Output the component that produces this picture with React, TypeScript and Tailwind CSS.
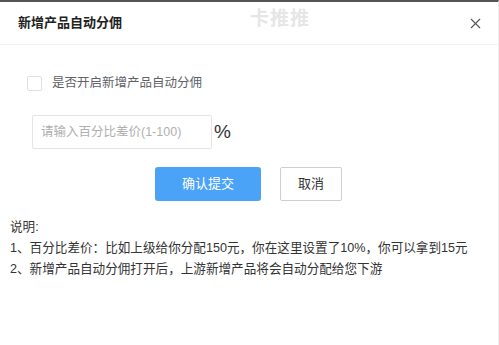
import React, { useState } from 'react';
import { X } from 'lucide-react';

const font = { fontFamily: '"Liberation Sans", "Noto Sans CJK SC", sans-serif' };

export default function App() {
  const [checked, setChecked] = useState(false);
  const [value, setValue] = useState('');

  return (
    <div className="w-[499px] h-[345px] bg-white overflow-hidden border-t-2 border-[#555] border-r border-r-[#eee]" style={font}>
      <div className="relative h-[43px] flex items-center justify-between pl-[18px] pr-[14px] border-b border-[#f3f3f3]">
        <h2 className="text-[13px] font-bold text-[#222]">新增产品自动分佣</h2>
        <span className="absolute left-[250px] top-[3px] text-[19px] font-bold text-[#e6e6e6] tracking-[1px]">卡推推</span>
        <button className="text-[#555]"><X className="w-[17px] h-[17px]" strokeWidth={1.6} /></button>
      </div>

      <div className="pt-[29px] pl-[27px]">
        <label className="flex items-center gap-[10px] cursor-pointer">
          <input type="checkbox" checked={checked} onChange={e => setChecked(e.target.checked)} className="sr-only" />
          <span className="w-[15px] h-[15px] rounded-[2px] border border-[#dcdfe6] bg-white"></span>
          <span className="text-[12.5px] text-[#606266]">是否开启新增产品自动分佣</span>
        </label>

        <div className="flex items-center mt-[22px] ml-[5px]">
          <input
            value={value}
            onChange={e => setValue(e.target.value)}
            placeholder="请输入百分比差价(1-100)"
            className="w-[180px] h-[34px] border border-[#e4e4e4] rounded-[2px] px-[8px] text-[12.5px] text-[#333] placeholder:text-[#b0b0b0] outline-none"
          />
          <span className="ml-[2px] text-[19px] text-[#333]">%</span>
        </div>

        <div className="flex gap-[19px] mt-[18px] ml-[128px]">
          <button className="w-[106px] h-[34px] rounded-[3px] bg-[#4aa3f7] text-white text-[13px]">确认提交</button>
          <button className="w-[62px] h-[34px] rounded-[2px] border border-[#cfcfcf] bg-white text-[#333] text-[13px]">取消</button>
        </div>
      </div>

      <div className="mt-[16px] pl-[10px] text-[12.6px] text-[#333] leading-[21px]">
        <p>说明:</p>
        <p>1、百分比差价：比如上级给你分配150元，你在这里设置了10%，你可以拿到15元</p>
        <p>2、新增产品自动分佣打开后，上游新增产品将会自动分配给您下游</p>
      </div>
    </div>
  );
}
